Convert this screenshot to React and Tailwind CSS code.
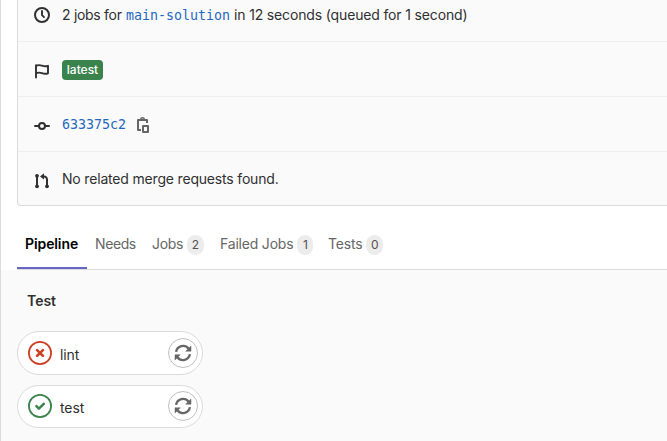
import React from 'react';

function ClockIcon() {
  return (
    <svg className="h-4 w-4" viewBox="0 0 16 16" fill="none" stroke="#303030">
      <circle cx="8" cy="8" r="7" strokeWidth="2" />
      <path d="M8 4v4.1l2 2" strokeWidth="1.9" strokeLinecap="round" strokeLinejoin="round" />
    </svg>
  );
}

function FlagIcon() {
  return (
    <svg className="h-4 w-4" viewBox="0 0 16 16" fill="none" stroke="#303030" strokeWidth="1.9">
      <path d="M2 14.500V2.300" strokeLinecap="round" />
      <path d="M2 2.900C4 1.800 5.700 1.900 8 2.700s4 .9 6 .1v7.500c-2.100.8-3.900.7-6-.1s-4-.8-6 .1" strokeLinejoin="round" />
    </svg>
  );
}

function CommitIcon() {
  return (
    <svg className="h-4 w-4" viewBox="0 0 16 16" fill="none" stroke="#303030" strokeWidth="2">
      <circle cx="8" cy="8" r="3" />
      <path d="M1 8h3.800M11.200 8H15" strokeLinecap="round" />
    </svg>
  );
}

function MergeIcon() {
  return (
    <svg className="h-4 w-4" viewBox="0 0 16 16" fill="#303030">
      <circle cx="3" cy="2.800" r="1.900" />
      <circle cx="3" cy="13.300" r="1.900" />
      <circle cx="13" cy="13.300" r="1.900" />
      <path d="M2 3h2v10H2zM6 3.400 10 .2v2.200c2.500.1 4 1.600 4 4.100V13h-2V6.700c0-1.400-.6-2.100-2-2.200v2.100z" />
    </svg>
  );
}

function CopyIcon() {
  return (
    <svg className="h-4 w-4" viewBox="0 0 16 16" fill="none" stroke="#666666" strokeWidth="2">
      <path d="M5 13H2V3h2.500M9 3h2v3" strokeLinejoin="round" />
      <path d="M4 3h5" />
      <path d="M4.700 3V2.300C4.700 1.300 5.400.8 6.500.8s1.800.5 1.800 1.500V3" strokeWidth="1.400" />
      <rect x="7" y="9" width="5" height="6" strokeLinejoin="round" />
    </svg>
  );
}

function RetryIcon() {
  return (
    <svg className="h-[18px] w-[18px]" viewBox="0 0 18 18" fill="none" stroke="#666666" strokeWidth="2.300">
      <path d="M2.100 7.900A7 7 0 0 1 14.600 4.800M15.900 10.100A7 7 0 0 1 3.400 13.200" />
      <path d="M17 1.900v5.300h-5.300zM1 16.100v-5.300h5.300z" fill="#666666" stroke="#666666" strokeWidth=".5" />
    </svg>
  );
}

function StatusIcon({ ok }) {
  return (
    <svg className="h-6 w-6" viewBox="0 0 24 24" fill="none" stroke={ok ? '#3a834d' : '#cc4125'}>
      <circle cx="12" cy="12" r="11.100" strokeWidth="1.800" />
      {ok ? (
        <path d="m8.400 12.200 2.500 2.400 4.900-4.800" strokeWidth="2.500" strokeLinecap="round" strokeLinejoin="round" />
      ) : (
        <path d="m9.100 9.100 5.800 5.800m0-5.800-5.800 5.800" strokeWidth="2.700" strokeLinecap="round" />
      )}
    </svg>
  );
}

function Count({ children, width }) {
  return (
    <span className={`ml-1 mt-px flex h-5 items-center justify-center rounded-full bg-[#ececec] text-[12px] tracking-normal text-[#525252] ${width}`}>
      {children}
    </span>
  );
}

function Job({ ok, name, height }) {
  return (
    <div className={`flex w-[186px] items-center rounded-full border border-[#dbdbdb] bg-white pl-[10px] pr-1 ${height}`}>
      <StatusIcon ok={ok} />
      <span className="ml-2 flex-1 pt-1 text-[14px] leading-5 tracking-[-0.1px] text-[#303030]">{name}</span>
      <span className="flex h-[30px] w-[30px] items-center justify-center rounded-full border border-[#bfbfbf]">
        <RetryIcon />
      </span>
    </div>
  );
}

export default function App() {
  return (
    <div className="h-[441px] w-[667px] overflow-hidden border-l border-[#dbdbdb] bg-white font-['Inter',sans-serif] text-[14px] leading-5 text-[#303030]">
      <div className="ml-4 flex h-[206px] flex-col rounded-bl-[4px] border-b border-l border-[#dbdbdb] bg-[#fafafa]">
        <div className="flex h-[42px] shrink-0 items-start border-b border-[#eeeeee] pl-4 pt-[5px]">
          <div className="mt-[2px]"><ClockIcon /></div>
          <div className="ml-3 flex whitespace-pre">
            <span className="w-[64px] tracking-[-0.3px]">2 jobs for </span>
            <span className="w-[108px] pt-px font-['DejaVu_Sans_Mono',monospace] text-[13.300px] text-[#1f68c1]">main-solution</span>
            <span className="tracking-[-0.15px]">in 12 seconds (queued for 1 second)</span>
          </div>
        </div>
        <div className="flex h-[55px] shrink-0 items-center border-b border-[#eeeeee] pl-4">
          <div className="mt-[4px]"><FlagIcon /></div>
          <span className="ml-3 mt-[2px] flex h-5 w-[41px] items-center justify-center rounded-[4px] bg-[#3a834d] text-[12px] font-medium text-white">latest</span>
        </div>
        <div className="flex h-[55px] shrink-0 items-center border-b border-[#eeeeee] pl-4">
          <div className="mt-[3px]"><CommitIcon /></div>
          <span className="ml-3 w-[74px] pt-[2px] font-['DejaVu_Sans_Mono',monospace] text-[13.300px] text-[#1f68c1]">633375c2</span>
          <div className="mt-[2px]"><CopyIcon /></div>
        </div>
        <div className="flex flex-1 items-center pl-4">
          <div className="mt-[4px]"><MergeIcon /></div>
          <span className="ml-3 mt-px tracking-[-0.18px]">No related merge requests found.</span>
        </div>
      </div>
      <div className="ml-4 flex h-[64px] items-end border-b border-[#dbdbdb] tracking-[-0.2px] text-[#666666]">
        <div className="flex h-[50px] w-[70px] items-center border-b-2 border-[#6666c4] pl-2 pt-[2px] font-semibold tracking-[-0.1px] text-black">Pipeline</div>
        <div className="flex h-[50px] w-[58px] items-center pl-2 tracking-[-0.4px]">Needs</div>
        <div className="flex h-[50px] w-[68px] items-center pl-[7px] tracking-[-0.35px]">Jobs<Count width="w-[17px]">2</Count></div>
        <div className="flex h-[50px] w-[108px] items-center pl-[7px]">Failed Jobs<Count width="w-4">1</Count></div>
        <div className="flex h-[50px] items-center pl-[7px]">Tests<Count width="w-[17px]">0</Count></div>
      </div>
      <div className="h-[171px] bg-[#fafafa] pl-4 pt-[21px]">
        <div className="pl-[10px] font-semibold">Test</div>
        <div className="mt-5 flex flex-col gap-[10px]">
          <Job name="lint" height="h-11" />
          <Job ok name="test" height="h-[43px] pb-px" />
        </div>
      </div>
    </div>
  );
}
